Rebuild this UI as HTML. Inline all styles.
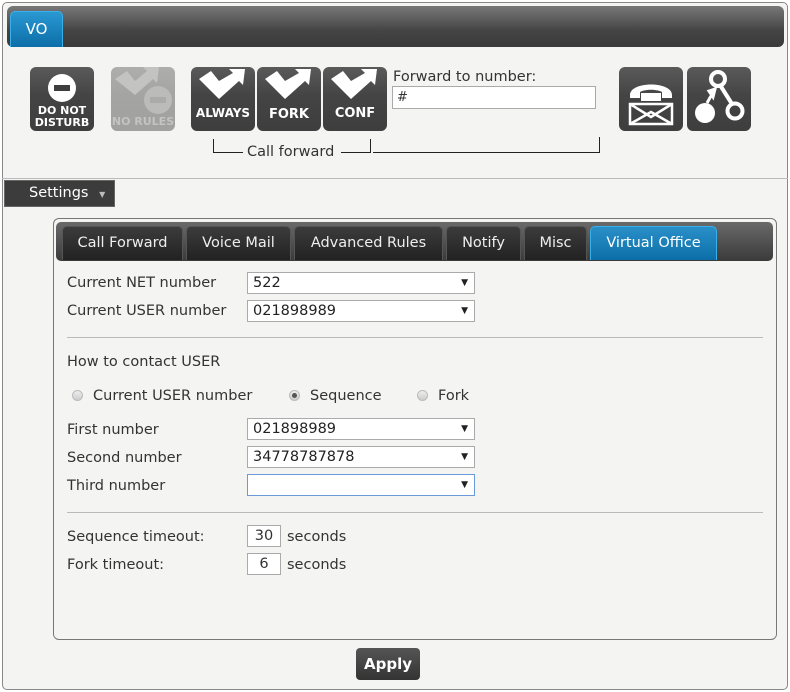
<!DOCTYPE html>
<html><head><meta charset="utf-8"><style>
*{box-sizing:border-box;margin:0;padding:0}
body{width:790px;height:692px;background:#fff;font-family:"DejaVu Sans","Liberation Sans",sans-serif;font-size:14.5px;color:#333;position:relative;overflow:hidden}
.a{position:absolute}
#outer{left:2px;top:2px;width:786px;height:688px;border:1px solid #888;border-radius:5px;background:#f4f4f2}
#topbar{left:7px;top:6px;width:777px;height:41px;border-radius:6px;background:linear-gradient(#787878,#444 60%,#3a3a3a)}
#vo{left:10px;top:11px;width:53px;height:36px;border:1px solid #3ab0ea;border-bottom:none;border-radius:5px 5px 0 0;background:linear-gradient(#2a98d2,#0c6ea8);color:#fff;font-size:15px;text-align:center;line-height:34px}
.btn{width:64px;height:64px;border-radius:6px;background:linear-gradient(#5a5a5a,#444 45%,#3e3e3e);color:#fff;font-weight:bold;font-size:12px;text-align:center}
.btn svg{position:absolute;left:0;top:0}
.btn span{position:absolute;left:0;right:0}
.line{background:#222}
.sel{height:22px;border:1px solid #aaa;background:#fff;font-size:14.5px;padding-left:5px;line-height:20px;color:#222}
.sel:after{content:"▼";position:absolute;right:6px;top:0;font-size:9px}
.lbl{left:67px;font-size:14.5px;color:#333}
.tab{top:226px;height:34px;border-radius:5px 5px 0 0;background:linear-gradient(#3c3c3c,#222);color:#eee;text-align:center;line-height:33px;font-size:14.5px;border:1px solid #555;border-bottom:none}
.rad{width:11px;height:11px;border-radius:50%;border:1px solid #bbb;background:linear-gradient(#eee,#ccc)}
.hr{height:1px;background:#bbb}
</style></head><body>
<div id="outer" class="a"></div>
<div id="topbar" class="a"></div>
<div id="vo" class="a">VO</div>

<div class="a btn" style="left:30px;top:67px">
<svg width="64" height="64"><circle cx="32" cy="21" r="14" fill="#fff"/><rect x="24" y="18" width="16" height="6" fill="#3e3e3e"/></svg>
<span style="top:38px;line-height:12px;font-size:11px">DO NOT<br>DISTURB</span></div>
<div class="a btn" style="left:111px;top:67px;opacity:.45">
<svg width="64" height="64"><path d="M4 12 L16 4 L24 14 L36 4 L32 0 L48 0 L46 16 L42 12 L24 28 Z" fill="#888"/><circle cx="47" cy="33" r="14" fill="#777"/><rect x="39" y="30" width="16" height="6" fill="#555"/></svg>
<span style="top:48px;font-size:11px;color:#888">NO RULES</span></div>
<div class="a btn" style="left:191px;top:67px">
<svg width="64" height="64"><path d="M8 12 L20 4 L28 14 L42 6 L38 2 L54 2 L52 18 L48 14 L28 32 Z" fill="#fff"/></svg>
<span style="top:39px">ALWAYS</span></div>
<div class="a btn" style="left:257px;top:67px">
<svg width="64" height="64"><path d="M8 12 L20 4 L28 14 L42 6 L38 2 L54 2 L52 18 L48 14 L28 32 Z" fill="#fff"/></svg>
<span style="top:40px;font-size:13px">FORK</span></div>
<div class="a btn" style="left:323px;top:67px">
<svg width="64" height="64"><path d="M8 12 L20 4 L28 14 L42 6 L38 2 L54 2 L52 18 L48 14 L28 32 Z" fill="#fff"/></svg>
<span style="top:39px;font-size:13px">CONF</span></div>

<div class="a" style="left:393px;top:69px;font-size:14.5px;color:#333">Forward to number:</div>
<div class="a" style="left:392px;top:86px;width:204px;height:23px;border:1px solid #aaa;background:#fff;padding-left:4px;line-height:21px;font-size:13px">#</div>

<div class="a btn" style="left:619px;top:67px">
<svg width="64" height="64"><path d="M11 28 C11 14 53 14 53 28 L53 31 L43 31 L43 25 C38 22 26 22 21 25 L21 31 L11 31 Z" fill="#fff"/><rect x="22" y="26" width="20" height="8" fill="#fff"/><rect x="11" y="37" width="42" height="20" fill="none" stroke="#fff" stroke-width="2.5"/><path d="M11 37 L32 50 L53 37 M11 57 L32 45 L53 57" stroke="#fff" stroke-width="2.5" fill="none"/></svg></div>
<div class="a btn" style="left:687px;top:67px">
<svg width="64" height="64"><circle cx="31" cy="12" r="7" fill="none" stroke="#fff" stroke-width="4"/><circle cx="48" cy="44" r="7.5" fill="none" stroke="#fff" stroke-width="4"/><line x1="33" y1="18" x2="45" y2="37" stroke="#fff" stroke-width="4"/><circle cx="18" cy="46" r="10" fill="#fff"/><path d="M20 36 L24 29 M22 24 L28 22 L26 30 Z" stroke="#fff" stroke-width="3" fill="#fff"/></svg></div>

<div class="a line" style="left:213px;top:139px;width:1px;height:14px"></div>
<div class="a line" style="left:213px;top:152px;width:30px;height:1px"></div>
<div class="a" style="left:247px;top:144px;font-size:14.5px;color:#333">Call forward</div>
<div class="a line" style="left:341px;top:152px;width:30px;height:1px"></div>
<div class="a line" style="left:370px;top:139px;width:1px;height:14px"></div>
<div class="a line" style="left:373px;top:152px;width:227px;height:1px"></div>
<div class="a line" style="left:599px;top:137px;width:1px;height:16px"></div>

<div class="a hr" style="left:2px;top:178px;width:786px"></div>
<div class="a" style="left:4px;top:180px;width:111px;height:27px;background:#3c3c3c;border:1px solid #666;color:#fff;font-size:14.5px;line-height:25px;padding-left:24px">Settings <span style="font-size:8px;color:#bbb;margin-left:6px">▼</span></div>

<div class="a" style="left:53px;top:218px;width:724px;height:422px;border:1px solid #777;border-radius:6px"></div>
<div class="a" style="left:56px;top:222px;width:717px;height:39px;border-radius:5px;background:linear-gradient(#6a6a6a,#3a3a3a)"></div>
<div class="a tab" style="left:62px;width:121px">Call Forward</div>
<div class="a tab" style="left:186px;width:105px">Voice Mail</div>
<div class="a tab" style="left:294px;width:149px">Advanced Rules</div>
<div class="a tab" style="left:446px;width:75px">Notify</div>
<div class="a tab" style="left:524px;width:63px">Misc</div>
<div class="a tab" style="left:590px;width:127px;background:linear-gradient(#2a90c8,#0c6ea8);border-color:#3ab0ea;color:#fff">Virtual Office</div>

<div class="a lbl" style="top:275px">Current NET number</div>
<div class="a sel" style="left:247px;top:272px;width:228px">522</div>
<div class="a lbl" style="top:303px">Current USER number</div>
<div class="a sel" style="left:247px;top:300px;width:228px">021898989</div>
<div class="a hr" style="left:67px;top:337px;width:696px"></div>
<div class="a lbl" style="top:354px">How to contact USER</div>
<div class="a rad" style="left:72px;top:390px"></div>
<div class="a" style="left:93px;top:388px">Current USER number</div>
<div class="a rad" style="left:289px;top:390px"><div style="width:5px;height:5px;border-radius:50%;background:#555;margin:2px"></div></div>
<div class="a" style="left:310px;top:388px">Sequence</div>
<div class="a rad" style="left:417px;top:390px"></div>
<div class="a" style="left:438px;top:388px">Fork</div>

<div class="a lbl" style="top:422px">First number</div>
<div class="a sel" style="left:247px;top:418px;width:228px">021898989</div>
<div class="a lbl" style="top:450px">Second number</div>
<div class="a sel" style="left:247px;top:446px;width:228px">34778787878</div>
<div class="a lbl" style="top:478px">Third number</div>
<div class="a sel" style="left:247px;top:474px;width:228px;border-color:#6a9ad8"></div>
<div class="a hr" style="left:67px;top:512px;width:696px"></div>

<div class="a lbl" style="top:529px">Sequence timeout:</div>
<div class="a" style="left:247px;top:525px;width:34px;height:22px;border:1px solid #aaa;background:#fff;text-align:center;line-height:20px">30</div>
<div class="a" style="left:287px;top:529px">seconds</div>
<div class="a lbl" style="top:557px">Fork timeout:</div>
<div class="a" style="left:247px;top:553px;width:34px;height:22px;border:1px solid #aaa;background:#fff;text-align:center;line-height:20px">6</div>
<div class="a" style="left:287px;top:557px">seconds</div>

<div class="a" style="left:356px;top:648px;width:64px;height:32px;border-radius:4px;background:linear-gradient(#555,#333);color:#fff;font-weight:bold;font-size:15px;text-align:center;line-height:33px">Apply</div>
</body></html>
